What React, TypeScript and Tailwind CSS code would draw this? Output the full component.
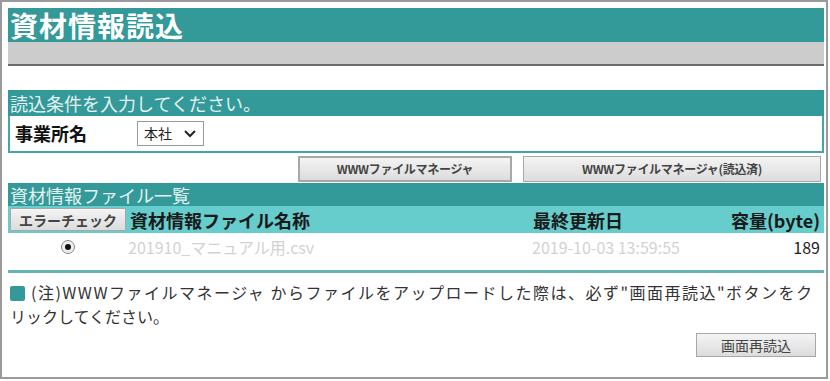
const jp = { fontFamily: '"Noto Sans CJK JP", "Noto Sans", sans-serif' };

function GrayButton({
  children,
  className = "",
}: {
  children: React.ReactNode;
  className?: string;
}) {
  return (
    <button
      className={
        "flex items-center justify-center border border-[#a8a8a8] bg-gradient-to-b from-[#f4f4f4] to-[#dcdcdc] text-[#444] leading-none " +
        className
      }
    >
      {children}
    </button>
  );
}

export default function App() {
  return (
    <div className="w-[830px] h-[381px] bg-white" style={jp}>
      <div className="w-[828px] h-[379px] border-2 border-[#9a9a9a] pl-[6px] pr-[2px] pt-[6px]">
        {/* Title */}
        <div className="h-[34px] bg-[#339999] flex items-center pl-[2px]">
          <h1 className="text-[28px] font-bold text-white leading-none tracking-[1px]">
            資材情報読込
          </h1>
        </div>
        <div className="h-[24px] bg-[#cccccc] border-b-2 border-[#6b6b6b]" />

        {/* Conditions */}
        <div className="mt-[24px]">
          <div className="h-[26px] bg-[#339999] flex items-center pl-[2px] text-[18px] text-[#e4f2f2] leading-none">
            読込条件を入力してください。
          </div>
          <div className="h-[37px] border-2 border-t-0 border-[#44a6a6] flex items-center pl-[5px]">
            <span className="w-[122px] text-[18px] font-bold text-[#111]">事業所名</span>
            <div className="h-[25px] w-[67px] border border-[#9a9a9a] flex items-center justify-between px-[6px] text-[14px] text-[#222]">
              <span>本社</span>
              <svg width="14" height="10" viewBox="0 0 14 10">
                <path d="M2 2 L7 7 L12 2" fill="none" stroke="#222" strokeWidth="2" />
              </svg>
            </div>
          </div>
        </div>

        {/* Buttons */}
        <div className="flex justify-end gap-[11px] mt-[3px] pr-[3px]">
          <GrayButton className="w-[214px] h-[26px] border-2 border-[#555] text-[12px] font-semibold tracking-tight">
            WWWファイルマネージャ
          </GrayButton>
          <GrayButton className="w-[298px] h-[26px] text-[12px] font-semibold tracking-tight">
            WWWファイルマネージャ(読込済)
          </GrayButton>
        </div>

        {/* File list */}
        <div className="mt-[1px]">
          <div className="h-[23px] bg-[#339999] flex items-center pl-[2px] text-[18px] text-[#e4f2f2] leading-none">
            資材情報ファイル一覧
          </div>
          <div className="h-[27px] bg-[#66cccc] flex items-center pl-[2px] pr-[4px] text-[18px] font-bold text-[#1a1a1a]">
            <GrayButton className="w-[116px] h-[23px] text-[14px]">エラーチェック</GrayButton>
            <span className="ml-[4px] w-[403px] leading-none">資材情報ファイル名称</span>
            <span className="leading-none">最終更新日</span>
            <span className="ml-auto leading-none">容量(byte)</span>
          </div>
          <div className="h-[28px] flex items-center pr-[4px] text-[16px]">
            <div className="w-[120px] flex justify-center">
              <span className="w-[14px] h-[14px] rounded-full border border-[#888] bg-[#eee] flex items-center justify-center">
                <span className="w-[6px] h-[6px] rounded-full bg-[#111]" />
              </span>
            </div>
            <span className="w-[404px] text-[#d2d2d2]">201910_マニュアル用.csv</span>
            <span className="text-[#d2d2d2]">2019-10-03 13:59:55</span>
            <span className="ml-auto text-[#222]">189</span>
          </div>
        </div>

        <div className="h-[3px] bg-[#66b3b3] mt-[9px]" />

        {/* Note */}
        <p className="mt-[7px] pl-[2px] text-[16px] leading-[24px] text-[#333] whitespace-nowrap">
          <span className="tracking-[1.5px]">
            <span className="inline-block w-[15px] h-[15px] bg-[#339999] rounded-[2px] align-[-2px] mr-[6px]" />
            (注)WWWファイルマネージャ からファイルをアップロードした際は、必ず"画面再読込"ボタンをク
          </span>
          <br />
          リックしてください。
        </p>

        <div className="flex justify-end pr-[8px] mt-[5px]">
          <GrayButton className="w-[120px] h-[24px] text-[14px]">画面再読込</GrayButton>
        </div>
      </div>
    </div>
  );
}
